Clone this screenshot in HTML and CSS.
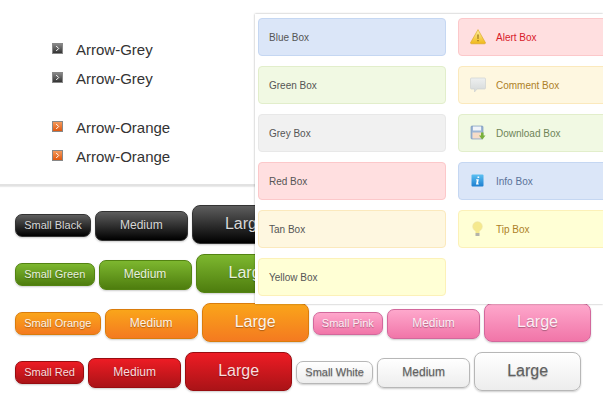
FILE: index.html
```html
<!DOCTYPE html>
<html lang="en">
<head>
    <meta charset="UTF-8">
    <title>Boxes and Buttons</title>
    <link rel="stylesheet" href="styles.css">
</head>
<body>

<!-- Arrow lists -->
<div class="lists">
    <ul class="arrow-list">
        <li><span class="arrow arrow-grey"><svg width="9" height="9" viewBox="0 0 9 9"><path d="M3.2 2 5.7 4.5 3.2 7" fill="none" stroke="#fff" stroke-width="1"/></svg></span>Arrow-Grey</li>
        <li><span class="arrow arrow-grey"><svg width="9" height="9" viewBox="0 0 9 9"><path d="M3.2 2 5.7 4.5 3.2 7" fill="none" stroke="#fff" stroke-width="1"/></svg></span>Arrow-Grey</li>
    </ul>
    <ul class="arrow-list">
        <li><span class="arrow arrow-orange"><svg width="9" height="9" viewBox="0 0 9 9"><path d="M3.2 2 5.7 4.5 3.2 7" fill="none" stroke="#fff" stroke-width="1"/></svg></span>Arrow-Orange</li>
        <li><span class="arrow arrow-orange"><svg width="9" height="9" viewBox="0 0 9 9"><path d="M3.2 2 5.7 4.5 3.2 7" fill="none" stroke="#fff" stroke-width="1"/></svg></span>Arrow-Orange</li>
    </ul>
</div>

<!-- Buttons -->
<div class="buttons">
    <div class="button-row">
        <a class="btn small black">Small Black</a>
        <a class="btn medium black">Medium</a>
        <a class="btn large black">Large</a>
    </div>
    <div class="button-row">
        <a class="btn small green">Small Green</a>
        <a class="btn medium green">Medium</a>
        <a class="btn large green">Large</a>
    </div>
    <div class="button-row">
        <a class="btn small orange">Small Orange</a>
        <a class="btn medium orange">Medium</a>
        <a class="btn large orange">Large</a>
        <a class="btn small pink">Small Pink</a>
        <a class="btn medium pink">Medium</a>
        <a class="btn large pink">Large</a>
    </div>
    <div class="button-row">
        <a class="btn small red">Small Red</a>
        <a class="btn medium red">Medium</a>
        <a class="btn large red">Large</a>
        <a class="btn small white">Small White</a>
        <a class="btn medium white">Medium</a>
        <a class="btn large white">Large</a>
    </div>
</div>

<!-- Message boxes panel, sits over the buttons -->
<div class="panel">
    <div class="box blue">Blue Box</div>
    <div class="box red-box alert">
        <svg class="icon" width="16" height="16" viewBox="0 0 16 16">
            <defs><linearGradient id="warn" x1="0" y1="0" x2="0" y2="1"><stop offset="0" stop-color="#fff0a0"/><stop offset="1" stop-color="#f0b818"/></linearGradient></defs>
            <path d="M8 .6 15.4 13.6Q15.6 14.8 14.4 14.8H1.6Q.4 14.8.6 13.6Z" fill="url(#warn)" stroke="#d9a520" stroke-width=".6"/>
            <path d="M7.4 5.5H8.6L8.4 10H7.6ZM7.4 11H8.6V12.3H7.4Z" fill="#8a6410"/>
        </svg>
        Alert Box
    </div>
    <div class="box green-box">Green Box</div>
    <div class="box tan comment">
        <svg class="icon" width="16" height="16" viewBox="0 0 16 16">
            <defs><linearGradient id="bubble" x1="0" y1="0" x2="0" y2="1"><stop offset="0" stop-color="#eef0f0"/><stop offset="1" stop-color="#d4d8d8"/></linearGradient></defs>
            <path d="M1.5 1H14.5Q15.5 1 15.5 2V11Q15.5 12 14.5 12H7L4.5 15V12H1.5Q.5 12 .5 11V2Q.5 1 1.5 1Z" fill="url(#bubble)" stroke="#cfd3d3" stroke-width=".7"/>
        </svg>
        Comment Box
    </div>
    <div class="box grey">Grey Box</div>
    <div class="box green-box download">
        <svg class="icon" width="16" height="16" viewBox="0 0 16 16">
            <rect x="1" y="1" width="12" height="13" rx="1" fill="#9db6d6" stroke="#6f8fb5" stroke-width=".6"/>
            <rect x="3" y="1.5" width="8" height="4" fill="#f2f5f8"/>
            <rect x="2.5" y="7.5" width="9" height="6" fill="#f6dcc8"/>
            <path d="M11 7.5H13.5V10.5H15.5L12.2 14.5 9 10.5H11Z" fill="#79b13a"/>
        </svg>
        Download Box
    </div>
    <div class="box red-box">Red Box</div>
    <div class="box blue info">
        <svg class="icon" width="16" height="16" viewBox="0 0 16 16">
            <defs><linearGradient id="inf" x1="0" y1="0" x2="0" y2="1"><stop offset="0" stop-color="#5cc0f2"/><stop offset="1" stop-color="#1e7fd0"/></linearGradient></defs>
            <rect x="1.5" y="1.5" width="12" height="12" rx="1" fill="url(#inf)"/>
            <path d="M7.5 3.6H9.2V5H7.5ZM6.2 6.3H8.8L8 10.6H8.9L8.7 11.6H6L6.8 7.3H6Z" fill="#fff"/>
        </svg>
        Info Box
    </div>
    <div class="box tan">Tan Box</div>
    <div class="box yellow tip">
        <svg class="icon" width="16" height="16" viewBox="0 0 16 16">
            <circle cx="7.5" cy="5.5" r="4.8" fill="#f5e98e" stroke="#ece3a8" stroke-width=".6"/>
            <path d="M5.5 9H9.5V12H5.5Z" fill="#f5e98e"/>
            <rect x="5.5" y="12" width="4" height="3" fill="#b4b4aa"/>
        </svg>
        Tip Box
    </div>
    <div class="box yellow">Yellow Box</div>
</div>

</body>
</html>
```

FILE: styles.css
```css
html, body {
    height: 100%;
    overflow: hidden;
}
body {
    margin: 0;
    font-family: "Liberation Sans", Arial, sans-serif;
    background-color: #fff;
    position: relative;
}

/* Arrow lists */
.lists {
    padding: 35px 0 13px 52px;
    border-bottom: 2px solid #e2e2e2;
    box-shadow: 0 1px 1px rgba(0,0,0,0.08);
}
.arrow-list {
    list-style: none;
    margin: 0 0 20px 0;
    padding: 0;
}
.arrow-list:last-child {
    margin-bottom: 0;
}
.arrow-list li {
    display: flex;
    align-items: center;
    height: 29px;
    font-size: 15px;
    color: #333;
}
.arrow {
    display: flex;
    align-items: center;
    justify-content: center;
    width: 9px;
    height: 9px;
    margin: -2px 13px 0 0;
    border: 1px solid #888;
}
.arrow-grey {
    background: linear-gradient(#888, #333);
}
.arrow-orange {
    background: linear-gradient(#f59a5c, #e0580f);
}

/* Buttons */
.buttons {
    padding: 19px 0 0 15px;
}
.button-row {
    display: flex;
    align-items: baseline;
    gap: 4px;
    height: 49px;
}
.btn {
    display: block;
    box-sizing: border-box;
    flex: none;
    text-align: center;
    border: 1px solid;
    box-shadow: 0 1px 2px rgba(0,0,0,0.2);
    text-shadow: 0 1px 1px rgba(0,0,0,0.3);
}
.small {
    font-size: 11px;
    line-height: 13px;
    padding: 4px 8.2px;
    height: 23px;
    border-radius: 7px;
}
.medium {
    font-size: 12px;
    line-height: 14px;
    width: 93px;
    padding: 6px 0 8px;
    height: 30px;
    border-radius: 7px;
}
.large {
    font-size: 16px;
    line-height: 18px;
    width: 107px;
    padding: 9px 0 10px;
    height: 39px;
    border-radius: 8px;
}
.black {
    color: #d7d7d7;
    border-color: #333;
    background: linear-gradient(#5e5e5e, #000);
}
.green {
    color: #e8f0de;
    border-color: #538312;
    background: linear-gradient(#7db72f, #4e7d0e);
}
.orange {
    color: #fef4e9;
    border-color: #da7c0c;
    background: linear-gradient(#faa51a, #f47a20);
}
.red {
    color: #faddde;
    border-color: #980c10;
    background: linear-gradient(#ed1c24, #aa1317);
}
.pink {
    color: #feeef5;
    border-color: #d2689c;
    background: linear-gradient(#fea8cc, #f175a8);
}
.white {
    color: #606060;
    border-color: #b7b7b7;
    background: linear-gradient(#fff, #ededed);
}

/* Message boxes */
.panel {
    position: absolute;
    left: 255px;
    right: 0;
    top: 14px;
    height: 290px;
    box-sizing: border-box;
    padding: 4px 0 0 3px;
    background-color: #fff;
    box-shadow: 0 0 2px rgba(0,0,0,0.35);
    overflow: hidden;
    display: grid;
    grid-template-columns: 188px 188px;
    grid-auto-rows: 38px;
    column-gap: 12px;
    row-gap: 10px;
    align-content: start;
}
.box {
    display: flex;
    align-items: center;
    box-sizing: border-box;
    padding-left: 10px;
    border: 1px solid;
    border-radius: 4px;
    font-size: 10px;
    color: #555;
}
.blue {
    background-color: #dbe6f8;
    border-color: #c5d7f2;
}
.green-box {
    background-color: #f1f9e3;
    border-color: #e2eecb;
}
.grey {
    background-color: #f1f1f1;
    border-color: #e8e8e8;
}
.red-box {
    background-color: #ffdfe0;
    border-color: #fcc8ca;
}
.tan {
    background-color: #fef7e0;
    border-color: #fbe9bd;
}
.yellow {
    background-color: #ffffd5;
    border-color: #fcf1b8;
}
.icon {
    flex: none;
    margin-right: 10px;
}
.alert {
    color: #d8202a;
}
.comment,
.tip {
    color: #ad7f28;
}
.download {
    color: #6f8458;
}
.info {
    color: #5a7299;
}
.alert,
.comment,
.download,
.info,
.tip {
    padding-left: 11px;
}
```
